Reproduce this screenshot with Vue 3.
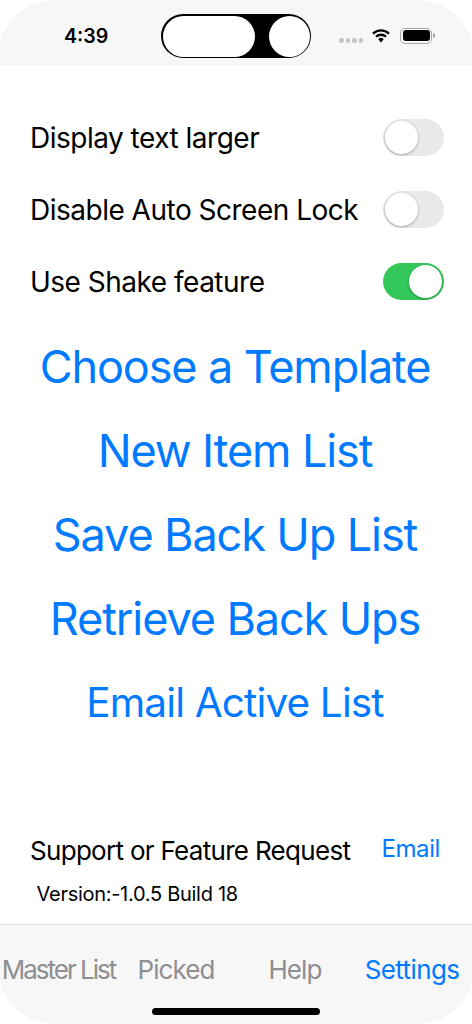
<script setup>
const toggles = [
  { label: 'Display text larger', on: false },
  { label: 'Disable Auto Screen Lock', on: false },
  { label: 'Use Shake feature', on: true },
]
const actions = [
  { label: 'Choose a Template', small: false },
  { label: 'New Item List', small: false },
  { label: 'Save Back Up List', small: false },
  { label: 'Retrieve Back Ups', small: false },
  { label: 'Email Active List', small: true },
]
const tabs = [
  { label: 'Master List', cls: 'master' },
  { label: 'Picked', cls: 'picked' },
  { label: 'Help', cls: 'help' },
  { label: 'Settings', cls: 'settings' },
]
</script>

<template>
  <div class="screen">
    <header class="status">
      <span class="time">4:39</span>
      <div class="island">
        <span class="pill"></span>
        <span class="dot"></span>
      </div>
      <div class="indicators">
        <span class="signal"><i></i><i></i><i></i><i></i></span>
        <svg class="wifi" width="18" height="14" viewBox="0 0 18 14">
          <path d="M1 4.6 A11.6 11.6 0 0 1 17 4.6" fill="none" stroke="#000" stroke-width="2.3" />
          <path d="M4 7.7 A7.4 7.4 0 0 1 14 7.7" fill="none" stroke="#000" stroke-width="2.3" />
          <path d="M6.3 10.2 A3.8 3.8 0 0 1 11.7 10.2 L9 13.4 Z" fill="#000" />
        </svg>
        <span class="battery"><span class="cell"></span></span>
        <span class="nub"></span>
      </div>
    </header>

    <main class="content">
      <section class="toggles">
        <div v-for="t in toggles" :key="t.label" class="toggle-row">
          <span class="toggle-label">{{ t.label }}</span>
          <span class="switch" :class="{ on: t.on }"><span class="knob"></span></span>
        </div>
      </section>

      <section class="actions">
        <div v-for="a in actions" :key="a.label" class="action" :class="{ small: a.small }">{{ a.label }}</div>
      </section>

      <section class="support">
        <div class="support-row">
          <span class="support-label">Support or Feature Request</span>
          <span class="support-link">Email</span>
        </div>
        <div class="version">Version:-1.0.5 Build 18</div>
      </section>
    </main>

    <footer class="tabbar">
      <div class="tabs">
        <span v-for="t in tabs" :key="t.label" class="tab" :class="t.cls">{{ t.label }}</span>
      </div>
      <div class="home"></div>
    </footer>
  </div>
</template>

<style>
html, body { margin: 0; background: #fff; }
</style>

<style scoped>
.screen {
  width: 472px;
  height: 1024px;
  display: flex;
  flex-direction: column;
  background: #fff;
  font-family: Inter, "Liberation Sans", sans-serif;
  color: #000;
  overflow: hidden;
}
.status {
  height: 65px;
  flex: none;
  background: #f7f7f7;
  border-radius: 56px 56px 0 0 / 50px 50px 0 0;
  display: flex;
  align-items: center;
  box-sizing: border-box;
  padding: 7px 0 0 64px;
}
.time {
  width: 97px;
  font-size: 19.6px;
  font-weight: 600;
  line-height: 24px;
}
.island {
  width: 150px;
  height: 44px;
  box-sizing: border-box;
  background: #000;
  border-radius: 22px;
  padding: 1.5px;
  display: flex;
  justify-content: space-between;
}
.pill {
  width: 92px;
  height: 41px;
  background: #fff;
  border-radius: 21px;
}
.dot {
  width: 41px;
  height: 41px;
  background: #fff;
  border-radius: 50%;
}
.indicators {
  display: flex;
  align-items: center;
  margin-left: 28px;
  margin-top: -1px;
}
.signal {
  display: flex;
  gap: 2px;
  margin-top: 10px;
}
.signal i {
  width: 4.5px;
  height: 4.5px;
  border-radius: 50%;
  background: #c4c4c4;
}
.wifi {
  margin-left: 9px;
}
.battery {
  margin-left: 10px;
  width: 32px;
  height: 16px;
  box-sizing: border-box;
  border: 1px solid #a8a8a8;
  border-radius: 5px;
  padding: 1.5px;
  display: flex;
}
.cell {
  flex: 1;
  background: #000;
  border-radius: 3px;
}
.nub {
  width: 1.5px;
  height: 5px;
  margin-left: 1px;
  background: #a8a8a8;
  border-radius: 0 2px 2px 0;
}
.content {
  flex: 1;
  display: flex;
  flex-direction: column;
}
.toggles {
  padding: 54px 28px 0 30px;
  display: flex;
  flex-direction: column;
  gap: 35px;
}
.toggle-row {
  height: 37px;
  display: flex;
  align-items: center;
  justify-content: space-between;
}
.toggle-label {
  font-size: 28px;
  line-height: 32px;
  letter-spacing: -0.5px;
}
.switch {
  width: 61px;
  height: 37px;
  box-sizing: border-box;
  border-radius: 19px;
  background: #e9e9ea;
  padding: 2px;
  display: flex;
}
.switch.on {
  background: #34c759;
  justify-content: flex-end;
}
.knob {
  width: 33px;
  height: 33px;
  border-radius: 50%;
  background: #fff;
  box-shadow: 0 1px 3px rgba(0, 0, 0, 0.3);
}
.actions {
  margin-top: 39px;
  display: flex;
  flex-direction: column;
  gap: 28px;
  align-items: center;
  padding-right: 2px;
}
.action {
  height: 56px;
  line-height: 56px;
  font-size: 45px;
  letter-spacing: -1.1px;
  color: #007aff;
  white-space: nowrap;
}
.action.small {
  font-size: 40.5px;
  letter-spacing: -0.85px;
}
.support {
  margin-top: 100px;
}
.support-row {
  display: flex;
  justify-content: space-between;
  align-items: center;
  padding: 1px 32px 0 30px;
  height: 36px;
}
.support-label {
  font-size: 26px;
  letter-spacing: -0.7px;
}
.support-link {
  font-size: 24px;
  letter-spacing: -0.4px;
  color: #007aff;
  margin-top: -4px;
}
.version {
  margin-top: 13px;
  padding-left: 36.5px;
  font-size: 20px;
  letter-spacing: -0.28px;
  line-height: 26px;
}
.tabbar {
  height: 100px;
  flex: none;
  box-sizing: border-box;
  background: #f7f7f7;
  border-top: 1px solid #e2e2e2;
  border-radius: 0 0 56px 56px / 0 0 50px 50px;
  display: flex;
  flex-direction: column;
  align-items: center;
}
.tabs {
  width: 100%;
  height: 60px;
  margin-top: 14px;
  display: grid;
  grid-template-columns: 117px 118px 120px 114px;
  align-items: center;
  justify-items: center;
}
.tab {
  font-size: 26px;
  color: #8e8e93;
  white-space: nowrap;
  letter-spacing: -0.9px;
}
.tab.master {
  letter-spacing: -2px;
}
.tab.settings {
  color: #007aff;
  letter-spacing: -0.6px;
}
.home {
  width: 168px;
  height: 7px;
  border-radius: 4px;
  background: #000;
  margin-top: 9px;
}
</style>
